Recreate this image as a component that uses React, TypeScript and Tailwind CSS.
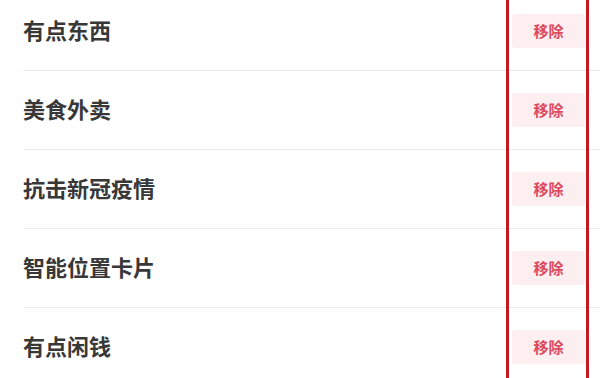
import React from "react";

const items = ["有点东西", "美食外卖", "抗击新冠疫情", "智能位置卡片", "有点闲钱"];

export default function App() {
  return (
    <div
      className="relative w-[600px] h-[378px] overflow-hidden bg-white"
      style={{ fontFamily: '"Noto Sans CJK SC", "Noto Sans", sans-serif' }}
    >
      <div className="-mt-[8px] ml-[23px]">
        {items.map((t) => (
          <div
            key={t}
            className="flex h-[79px] items-center justify-between border-b border-[#ececec] pr-[15px]"
          >
            <span className="pb-[3px] text-[22px] font-semibold text-[#383838]">{t}</span>
            <button className="flex h-[34px] w-[73px] items-center justify-center rounded-[3px] bg-[#fdeef0] text-[15px] font-semibold text-[#dc4a60]">
              移除
            </button>
          </div>
        ))}
      </div>
      <div className="absolute left-[506px] top-0 h-full w-[3px] bg-[#c21a24]" />
      <div className="absolute left-[586px] top-0 h-full w-[3px] bg-[#c21a24]" />
    </div>
  );
}
